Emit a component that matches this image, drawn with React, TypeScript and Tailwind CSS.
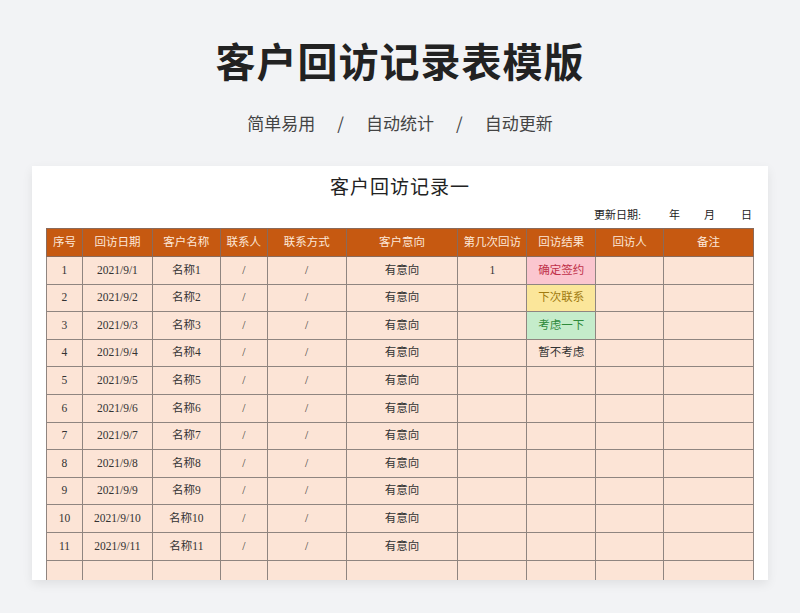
import React from "react";

const W = [36, 70, 68, 47, 79, 112, 69, 69, 68, 90];
const H = ["序号", "回访日期", "客户名称", "联系人", "联系方式", "客户意向", "第几次回访", "回访结果", "回访人", "备注"];
const res: Record<number, [string, string]> = {
  1: ["确定签约", "bg-[#fbc6cf] text-[#c0304a]"],
  2: ["下次联系", "bg-[#fbe69a] text-[#a07a10]"],
  3: ["考虑一下", "bg-[#c5eccb] text-[#2f8a3c]"],
  4: ["暂不考虑", "text-[#333]"],
};
const ff = { fontFamily: '"Liberation Serif", "Noto Sans CJK SC", serif' };

export default function App() {
  const rows = Array.from({ length: 12 }, (_, i) => i + 1);
  return (
    <div className="w-[800px] h-[613px] bg-[#f2f3f5] overflow-hidden" style={{ fontFamily: '"Noto Sans CJK SC", sans-serif' }}>
      <div className="pt-[30px] text-center text-[40px] font-bold text-[#222] leading-[60px] tracking-[1px]">客户回访记录表模版</div>
      <div className="mt-[20px] text-center text-[17px] text-[#444] leading-[26px] flex justify-center gap-[22px]">
        <span>简单易用</span><span>/</span><span>自动统计</span><span>/</span><span>自动更新</span>
      </div>
      <div className="mt-[30px] ml-[32px] w-[736px] h-[414px] bg-white shadow-[0_4px_10px_rgba(0,0,0,0.08)] overflow-hidden pt-[8px] px-[14px]" style={ff}>
        <div className="text-center text-[19px] text-[#222] leading-[28px] tracking-[1px]">客户回访记录一</div>
        <div className="flex justify-end text-[11px] text-[#222] h-[26px] items-center pr-[2px]">
          <span>更新日期:</span><span className="ml-[28px]">年</span><span className="ml-[24px]">月</span><span className="ml-[26px]">日</span>
        </div>
        <table className="border-collapse text-[11.5px] text-[#333]" style={{ tableLayout: "fixed" }}>
          <colgroup>{W.map((w, i) => <col key={i} style={{ width: w }} />)}</colgroup>
          <thead>
            <tr className="h-[28px] bg-[#c65911] text-[#fde8d9]">
              {H.map((h) => <th key={h} className="border border-[#8a6a5a] font-normal p-0">{h}</th>)}
            </tr>
          </thead>
          <tbody>
            {rows.map((r) => {
              const x = res[r];
              return (
                <tr key={r} className="h-[27.6px] bg-[#fce4d6]">
                  <td className="border border-[#8f8580] text-center p-0">{r <= 11 ? r : ""}</td>
                  <td className="border border-[#8f8580] text-center p-0">{r <= 11 ? `2021/9/${r}` : ""}</td>
                  <td className="border border-[#8f8580] text-center p-0">{r <= 11 ? `名称${r}` : ""}</td>
                  <td className="border border-[#8f8580] text-center p-0">{r <= 11 ? "/" : ""}</td>
                  <td className="border border-[#8f8580] text-center p-0">{r <= 11 ? "/" : ""}</td>
                  <td className="border border-[#8f8580] text-center p-0">{r <= 11 ? "有意向" : ""}</td>
                  <td className="border border-[#8f8580] text-center p-0">{r === 1 ? "1" : ""}</td>
                  <td className={`border border-[#8f8580] text-center p-0 ${x ? x[1] : ""}`}>{x ? x[0] : ""}</td>
                  <td className="border border-[#8f8580] p-0"></td>
                  <td className="border border-[#8f8580] p-0"></td>
                </tr>
              );
            })}
          </tbody>
        </table>
      </div>
    </div>
  );
}
